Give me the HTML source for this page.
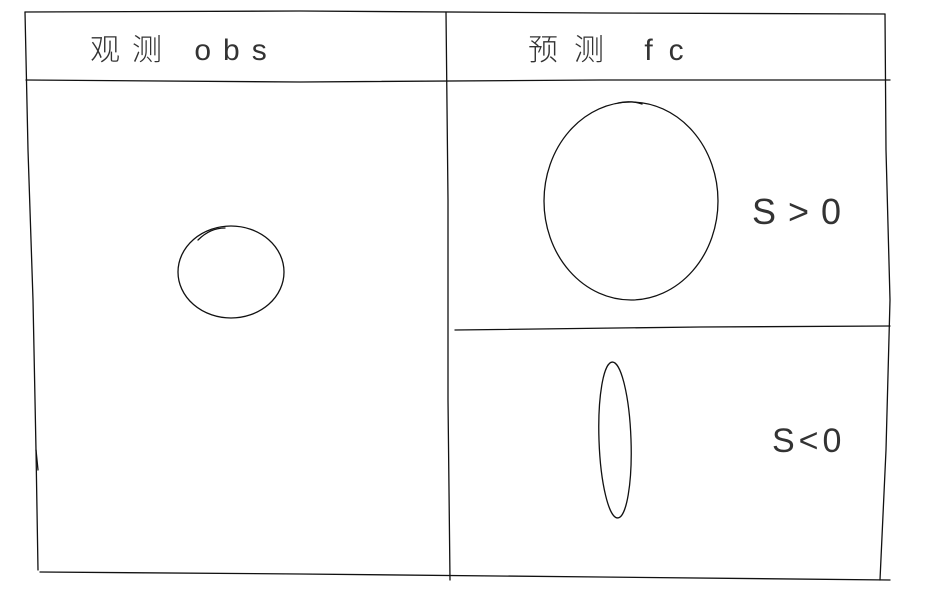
<!DOCTYPE html>
<html><head><meta charset="utf-8"><style>
html,body{margin:0;padding:0;background:#fff;width:950px;height:605px;overflow:hidden}
svg{display:block}
text{font-family:"Liberation Sans","Noto Sans CJK SC",sans-serif;fill:#333;font-weight:300}
</style></head><body>
<svg width="950" height="605" viewBox="0 0 950 605" xmlns="http://www.w3.org/2000/svg">
<g fill="none" stroke="#111" stroke-width="1.3" stroke-linecap="round">
<path d="M25 12 L 300 11 L 600 13 L 885 14"/>
<path d="M26 80 L 300 82 L 600 80 L 890 80"/>
<path d="M25 12 L 28 150 L 33 300 L 36 450 L 38 570"/>
<path d="M446 12 L 448 200 L 448 400 L 450 580"/>
<path d="M885 14 L 886 150 L 890 300 L 886 450 L 880 580"/>
<path d="M40 572 L 300 574 L 600 577 L 890 580"/>
<path d="M455 330 L 700 327 L 890 326"/>
<path d="M36 450 L 38 470"/>
<ellipse cx="231" cy="272" rx="53" ry="46"/>
<path d="M198 240 Q 210 228 225 228"/>
<ellipse cx="631" cy="201" rx="87" ry="99"/>
<path d="M618 103 Q 630 100 642 104"/>
<ellipse cx="615" cy="440" rx="16" ry="78" transform="rotate(-2 615 440)"/>
</g>
<text x="90" y="60" font-size="30" letter-spacing="12">观测 obs</text>
<text x="528" y="60" font-size="30" letter-spacing="16">预测 fc</text>
<text x="752" y="224" font-size="36" letter-spacing="12">S&gt;0</text>
<text x="772" y="452" font-size="34" letter-spacing="4">S&lt;0</text>
</svg>
</body></html>
